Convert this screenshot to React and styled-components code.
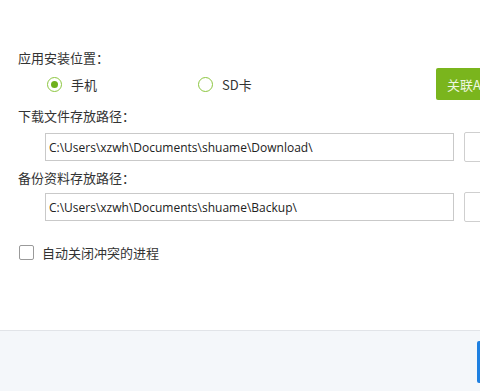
import React, { useState } from 'react'
import styled, { createGlobalStyle } from 'styled-components'

const GlobalStyle = createGlobalStyle`
  html, body {
    margin: 0;
    padding: 0;
    background: #fff;
    overflow: hidden;
  }
  body {
    font-family: "Noto Sans CJK SC", "Noto Sans", sans-serif;
    color: #333;
  }
`

const Page = styled.div`
  width: 580px;
  height: 391px;
  display: flex;
  flex-direction: column;
  background: #fff;
`

const Content = styled.div`
  flex: 1;
  display: flex;
  flex-direction: column;
  padding-left: 18px;
`

const Label = styled.div`
  font-size: 13px;
  line-height: 20px;
  height: 20px;
  margin-top: ${(p) => p.$top}px;
  color: #333;
`

const RadioRow = styled.div`
  display: flex;
  align-items: center;
  height: 32px;
  padding-left: 29px;
`

const RadioItem = styled.label`
  display: flex;
  align-items: center;
  gap: 9px;
  width: ${(p) => p.$width}px;
  font-size: 13px;
  color: #333;
  cursor: pointer;
`

const RadioRing = styled.span`
  box-sizing: border-box;
  width: 15px;
  height: 15px;
  border-radius: 50%;
  border: 1.5px solid #8cc63f;
  display: flex;
  align-items: center;
  justify-content: center;
  &::after {
    content: '';
    width: 7px;
    height: 7px;
    border-radius: 50%;
    background: #6fb01c;
    display: ${(p) => (p.$checked ? 'block' : 'none')};
  }
`

const GreenButton = styled.button`
  height: 32px;
  width: 110px;
  border: none;
  border-radius: 2px;
  background: #7ab51d;
  color: #eef7e0;
  font-family: inherit;
  font-size: 13px;
  text-align: left;
  padding: 0 0 0 11px;
`

const PathRow = styled.div`
  display: flex;
  align-items: center;
  height: 30px;
  margin-top: ${(p) => p.$top}px;
  padding-left: 27px;
`

const PathInput = styled.div`
  box-sizing: border-box;
  width: 409px;
  height: 28px;
  border: 1px solid #c9c9c9;
  display: flex;
  align-items: center;
  padding-left: 3px;
  font-family: "Open Sans", "Noto Sans", sans-serif;
  font-size: 12px;
  color: #222;
  white-space: nowrap;
  overflow: hidden;
`

const BrowseButton = styled.button`
  box-sizing: border-box;
  margin-left: 10px;
  width: 80px;
  height: 30px;
  border: 1px solid #cfcfcf;
  border-radius: 2px;
  background: #fff;
  font-family: inherit;
  font-size: 13px;
  color: #333;
  padding-left: 30px;
`

const CheckRow = styled.label`
  display: flex;
  align-items: center;
  gap: 8px;
  margin-top: 22px;
  height: 16px;
  padding-left: 1px;
  font-size: 13px;
  color: #333;
`

const CheckBox = styled.span`
  box-sizing: border-box;
  width: 15px;
  height: 15px;
  border: 1px solid #9a9a9a;
  border-radius: 2px;
  background: #fff;
`

const Footer = styled.div`
  box-sizing: border-box;
  height: 61px;
  flex-shrink: 0;
  border-top: 1px solid #e1e4e8;
  background: #f4f7fa;
  display: flex;
  align-items: flex-start;
  padding: 10px 0 0 477px;
`

const BlueButton = styled.button`
  width: 100px;
  height: 42px;
  border: none;
  border-radius: 2px;
  background: #1e80e1;
  color: #fff;
  font-family: inherit;
  font-size: 14px;
`

export default function App() {
  const [target, setTarget] = useState('phone')
  return (
    <>
      <GlobalStyle />
      <Page>
        <Content>
          <Label $top={48}>应用安装位置：</Label>
          <RadioRow>
            <RadioItem $width={151} onClick={() => setTarget('phone')}>
              <RadioRing $checked={target === 'phone'} />
              手机
            </RadioItem>
            <RadioItem $width={238} onClick={() => setTarget('sd')}>
              <RadioRing $checked={target === 'sd'} />
              SD卡
            </RadioItem>
            <GreenButton>关联APK文件</GreenButton>
          </RadioRow>
          <Label $top={6}>下载文件存放路径：</Label>
          <PathRow $top={6}>
            <PathInput>C:\Users\xzwh\Documents\shuame\Download\</PathInput>
            <BrowseButton>浏览</BrowseButton>
          </PathRow>
          <Label $top={6}>备份资料存放路径：</Label>
          <PathRow $top={4}>
            <PathInput>C:\Users\xzwh\Documents\shuame\Backup\</PathInput>
            <BrowseButton>浏览</BrowseButton>
          </PathRow>
          <CheckRow>
            <CheckBox />
            自动关闭冲突的进程
          </CheckRow>
        </Content>
        <Footer>
          <BlueButton>确定</BlueButton>
        </Footer>
      </Page>
    </>
  )
}
